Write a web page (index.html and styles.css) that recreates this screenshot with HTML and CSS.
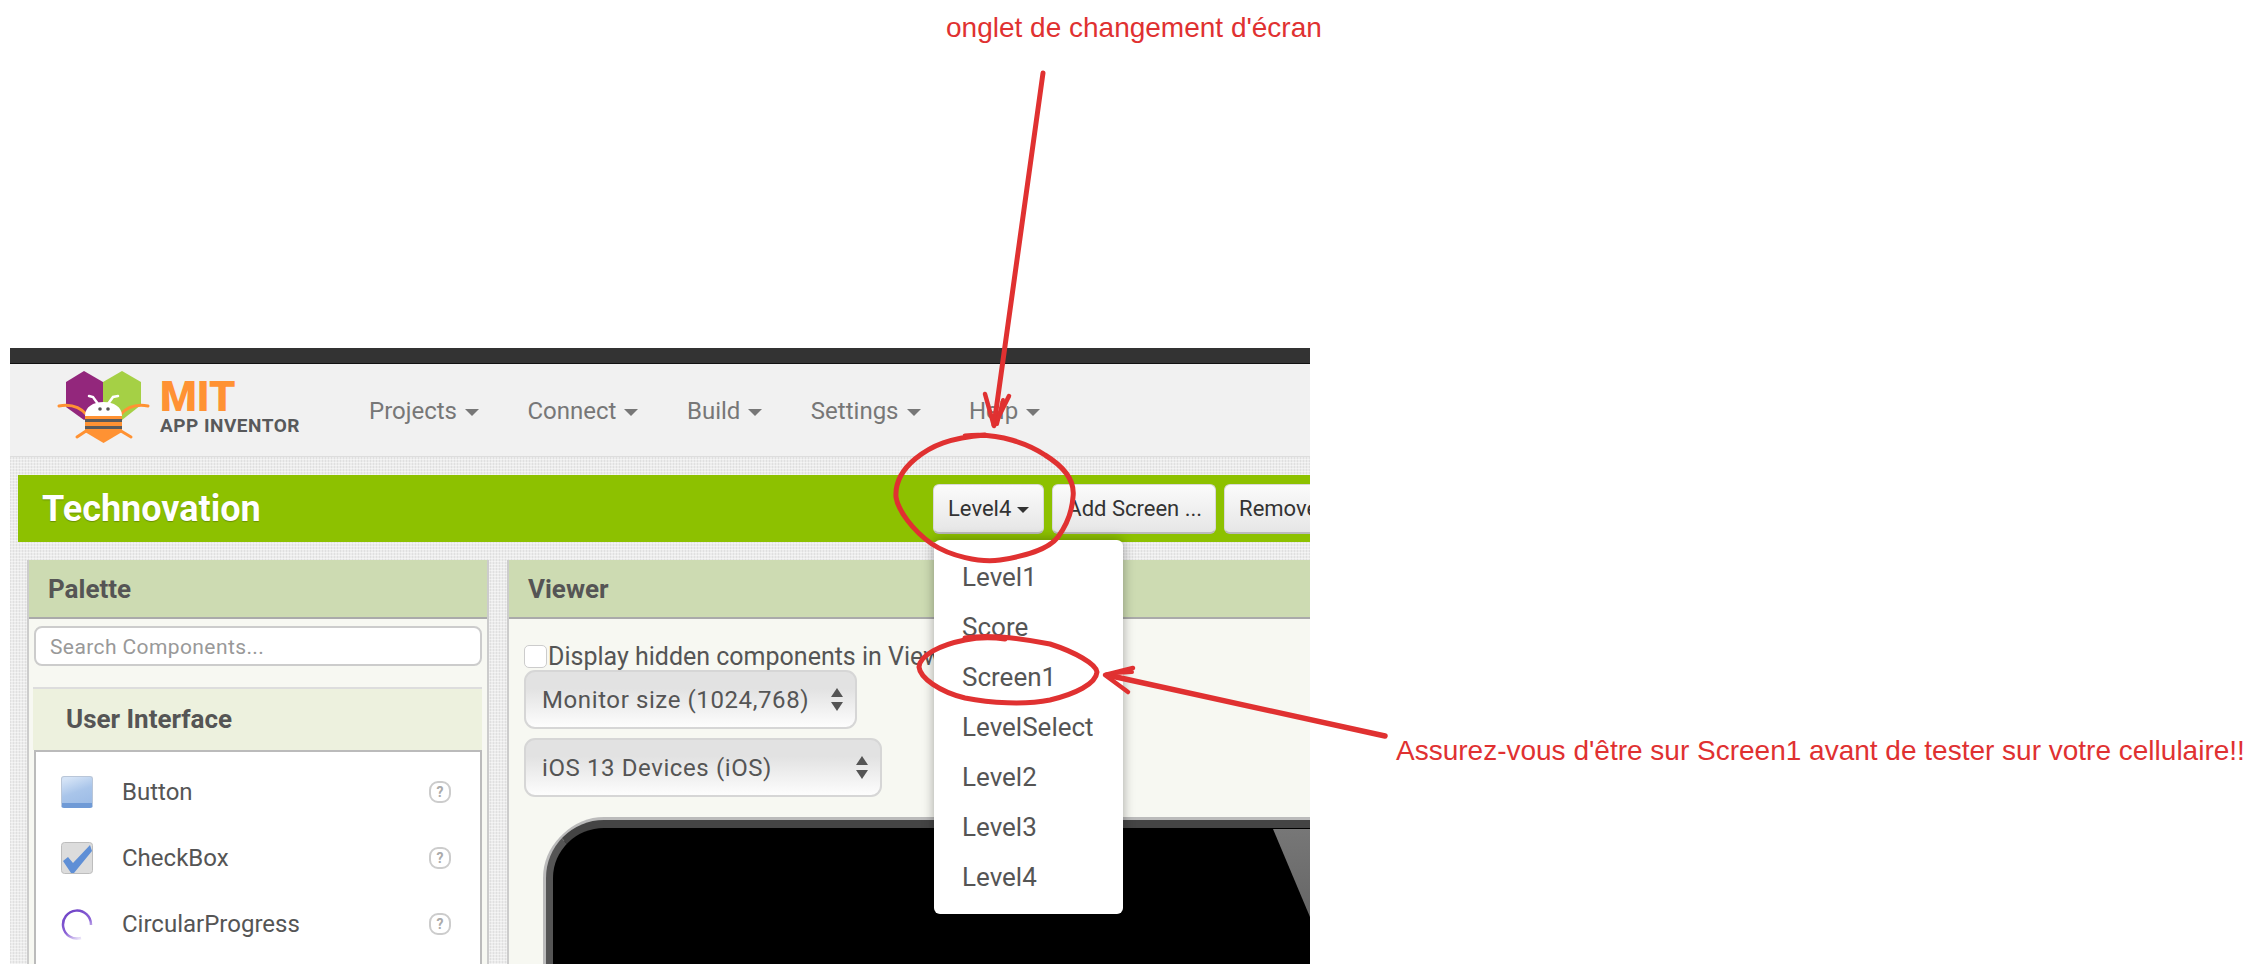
FILE: index.html
```html
<!DOCTYPE html>
<html lang="fr">
<head>
<meta charset="utf-8">
<title>Technovation</title>
<link rel="stylesheet" href="styles.css">
</head>
<body>
<div class="page">
  <div class="shot">
    <div class="topbar"></div>
    <header class="nav">
      <svg class="logo-mark" viewBox="55 366 100 80" width="100" height="80">
        <polygon fill="#93277c" points="84,371 103,382 103,410 84,420 66,407 66,382"/>
        <polygon fill="#a5d045" points="122,371 141,382 141,405 122,420 103,410 103,382"/>
        <path d="M59 406 C70 404 80 407 87 415" fill="none" stroke="#ff9233" stroke-width="3" stroke-linecap="round"/>
        <path d="M148 406 C137 404 127 407 120 415" fill="none" stroke="#ff9233" stroke-width="3" stroke-linecap="round"/>
        <path d="M77 437 L86 431 M131 437 L121 431" fill="none" stroke="#ff9233" stroke-width="3" stroke-linecap="round"/>
        <path d="M89 396 L93 397 L98 404 M118 396 L113 397 L108 404" fill="none" stroke="#fff" stroke-width="2.5" stroke-linecap="round"/>
        <path d="M85 416 C85 407 93 402 103.500 402 C114 402 122 407 122 416 Z" fill="#fff"/>
        <circle cx="100" cy="409" r="1.800" fill="#555"/>
        <circle cx="108" cy="409" r="1.800" fill="#555"/>
        <rect x="85" y="416" width="37" height="16" fill="#ff9233"/>
        <rect x="85" y="419" width="37" height="3" fill="#5a5a5a"/>
        <rect x="85" y="426" width="37" height="3" fill="#5a5a5a"/>
        <polygon fill="#ff9233" points="85,432 122,432 103.500,443"/>
      </svg>
      <div class="logo-text">
        <span class="logo-mit">MIT</span>
        <span class="logo-app">APP INVENTOR</span>
      </div>
      <nav class="menu-row">
        <span class="menu-item">Projects<i class="caret"></i></span>
        <span class="menu-item">Connect<i class="caret"></i></span>
        <span class="menu-item">Build<i class="caret"></i></span>
        <span class="menu-item">Settings<i class="caret"></i></span>
        <span class="menu-item">Help<i class="caret"></i></span>
      </nav>
    </header>
    <main class="work">
      <div class="project-bar">
        <h1 class="project-title">Technovation</h1>
        <button class="tool-btn">Level4<i class="caret caret-dark"></i></button>
        <button class="tool-btn tool-btn-add">Add Screen ...</button>
        <button class="tool-btn">Remove Screen</button>
      </div>
      <div class="panels">
        <section class="panel palette">
          <h2 class="panel-head">Palette</h2>
          <div class="search">Search Components...</div>
          <h3 class="drawer-head">User Interface</h3>
          <ul class="drawer">
            <li class="comp">
              <span class="ico ico-button"></span>
              <span class="comp-name">Button</span>
              <span class="help">?</span>
            </li>
            <li class="comp">
              <svg class="ico" viewBox="0 0 32 32" width="32" height="32">
                <rect x="0.500" y="0.500" width="31" height="31" rx="3" fill="#dcdcdc" stroke="#bdbdbd"/>
                <path d="M2 19 L7 15 L12 21 L29 3 L31 9 L13 31 L10 31 Z" fill="#5f8fd6"/>
              </svg>
              <span class="comp-name">CheckBox</span>
              <span class="help">?</span>
            </li>
            <li class="comp">
              <svg class="ico" viewBox="0 0 32 32" width="32" height="32">
                <defs>
                  <linearGradient id="ring" x1="0" y1="0" x2="0.600" y2="1">
                    <stop offset="0" stop-color="#6b3fc4"/>
                    <stop offset="0.650" stop-color="#8b62d6"/>
                    <stop offset="1" stop-color="#e9e2f8"/>
                  </linearGradient>
                </defs>
                <path d="M30 17 A14 14 0 1 0 20 30" fill="none" stroke="url(#ring)" stroke-width="2.500"/>
              </svg>
              <span class="comp-name">CircularProgress</span>
              <span class="help">?</span>
            </li>
          </ul>
        </section>
        <section class="panel viewer">
          <h2 class="panel-head">Viewer</h2>
          <div class="viewer-body">
            <label class="hidden-row"><span class="check"></span>Display hidden components in Viewer</label>
            <div class="select select-monitor">Monitor size (1024,768)<span class="updown"></span></div>
            <div class="select select-device">iOS 13 Devices (iOS)<span class="updown"></span></div>
            <div class="device">
              <div class="notch"></div>
            </div>
          </div>
        </section>
      </div>
    </main>
    <ul class="screen-menu">
      <li>Level1</li>
      <li>Score</li>
      <li>Screen1</li>
      <li>LevelSelect</li>
      <li>Level2</li>
      <li>Level3</li>
      <li>Level4</li>
    </ul>
  </div>
  <svg class="marks" viewBox="0 0 2261 974" width="2261" height="974">
    <g fill="none" stroke="#e03131" stroke-linecap="round" stroke-linejoin="round">
      <path stroke-width="5" d="M1043 73 L994 425"/>
      <path stroke-width="4.500" d="M985 394 L994 426 L1009 396"/>
      <path stroke-width="4" d="M997 424 L1003 400"/>
      <path stroke-width="5" d="M965 436 C1000 432 1030 445 1045 455 C1066 468 1075 482 1073 497 C1072 512 1066 526 1058 537 C1048 550 1025 556 1000 560 C980 563 950 556 932 544 C912 530 898 510 896 497 C895 482 902 470 915 459 C932 445 950 438 985 435"/>
      <path stroke-width="5" d="M965 638 C990 634 1020 638 1050 644 C1075 652 1096 664 1097 672 C1096 684 1075 694 1050 700 C1025 705 990 703 965 698 C940 692 920 678 919 667 C920 655 940 645 965 640 C975 638 990 637 1005 639"/>
      <path stroke-width="5.500" d="M1385 736 L1107 675"/>
      <path stroke-width="4.500" d="M1133 668 L1105 675 L1128 692"/>
      <path stroke-width="4" d="M1115 673 L1132 672"/>
    </g>
  </svg>
  <p class="note note-top">onglet de changement d'écran</p>
  <p class="note note-side">Assurez-vous d'être sur Screen1 avant de tester sur votre cellulaire!!</p>
</div>
</body>
</html>
```

FILE: styles.css
```css
* { box-sizing: border-box; }

html, body {
  margin: 0;
  padding: 0;
  background: #fff;
}

.page {
  position: relative;
  width: 2261px;
  height: 974px;
  overflow: hidden;
  padding: 348px 0 0 10px;
  font-family: Roboto, "Liberation Sans", sans-serif;
}

.shot {
  position: relative;
  width: 1300px;
  height: 616px;
  overflow: hidden;
  display: flex;
  flex-direction: column;
  color: #555;
}

.topbar {
  flex: 0 0 16px;
  background: #333;
  border-bottom: 1px solid #111;
}

.nav {
  flex: 0 0 92px;
  display: flex;
  align-items: center;
  background: #f1f1f1;
  padding-left: 45px;
}

.logo-mark { flex: none; margin-bottom: 8px; }

.logo-text {
  flex: 0 0 214px;
  display: flex;
  flex-direction: column;
  padding: 0 0 5px 5px;
  line-height: 1;
}

.logo-mit {
  font-weight: 900;
  font-size: 42px;
  line-height: 36px;
  color: #ff9233;
}

.logo-app {
  font-weight: 700;
  font-size: 19px;
  line-height: 22px;
  letter-spacing: 0.5px;
  color: #58595b;
}

.menu-row {
  display: flex;
  gap: 48.5px;
  margin-top: 2px;
}

.menu-item {
  font-size: 24px;
  color: #777;
  white-space: nowrap;
}

.caret {
  display: inline-block;
  width: 0;
  height: 0;
  margin-left: 8px;
  vertical-align: middle;
  border-left: 7px solid transparent;
  border-right: 7px solid transparent;
  border-top: 7px solid #777;
}

.caret-dark {
  margin-left: 6px;
  border-top-color: #333;
  border-left-width: 6px;
  border-right-width: 6px;
  border-top-width: 6px;
}

.work {
  flex: 1;
  min-height: 0;
  padding: 18px 0 0 8px;
  background-color: #ececec;
  background-image:
    repeating-linear-gradient(0deg, rgba(255,255,255,0.45) 0 1px, transparent 1px 3px),
    repeating-linear-gradient(90deg, rgba(200,200,200,0.35) 0 1px, transparent 1px 3px);
  border-top: 1px solid #ddd;
}

.project-bar {
  display: flex;
  align-items: center;
  gap: 8px;
  height: 67px;
  background: #8dc100;
  white-space: nowrap;
  overflow: hidden;
}

.project-title {
  flex: 0 0 907px;
  margin: 0;
  padding-left: 24px;
  font-size: 36px;
  font-weight: 700;
  color: #fff;
  text-shadow: 0 1px 1px rgba(0,0,0,0.25);
}

.tool-btn {
  flex: none;
  height: 50px;
  padding: 0 14px;
  font-family: inherit;
  font-size: 22px;
  color: #333;
  background: linear-gradient(#fbfbfb, #e6e6e6);
  border: 1px solid #d8d8d8;
  border-bottom: 2px solid #bbb;
  border-radius: 6px;
}

.tool-btn-add { padding: 0 13px 0 14px; }

.panels {
  display: flex;
  gap: 18px;
  margin: 18px 0 0 9px;
  height: 420px;
}

.panel {
  display: flex;
  flex-direction: column;
  background: #f7f8f2;
  border-left: 2px solid #ccc;
  border-right: 2px solid #ccc;
  overflow: hidden;
}

.palette { flex: 0 0 462px; }

.viewer { flex: 1; border-right: 0; }

.panel-head {
  flex: 0 0 59px;
  margin: 0;
  padding: 2px 0 0 19px;
  line-height: 55px;
  font-size: 26px;
  font-weight: 700;
  color: #555;
  background: #cddbb2;
  border-bottom: 2px solid #aaa;
}

.search {
  flex: 0 0 40px;
  margin: 7px 5px 0 5px;
  padding: 2px 0 0 14px;
  line-height: 34px;
  font-size: 21px;
  letter-spacing: 0.4px;
  color: #999;
  background: #fff;
  border: 2px solid #ccc;
  border-radius: 8px;
}

.drawer-head {
  flex: 0 0 63px;
  margin: 21px 5px 0 4px;
  padding-left: 33px;
  line-height: 60px;
  font-size: 26px;
  font-weight: 700;
  color: #555;
  background: #edf1de;
  border-top: 2px solid #ddd;
}

.drawer {
  flex: 1;
  margin: 0 5px;
  padding: 7px 0 0 0;
  list-style: none;
  background: #fff;
  border: 2px solid #bbb;
  border-bottom: 0;
}

.comp {
  display: flex;
  align-items: center;
  height: 66px;
  padding-left: 25px;
}

.ico {
  flex: 0 0 32px;
  width: 32px;
  height: 32px;
}

.ico-button {
  border: 1px solid #b9c6d8;
  border-bottom: 5px solid #6f9ad6;
  border-radius: 3px;
  background: linear-gradient(160deg, #d4e3f6 10%, #a9c5ea 55%, #9dbce6);
}

.comp-name {
  flex: 1;
  padding-left: 29px;
  font-size: 24px;
  color: #555;
}

.help {
  flex: 0 0 22px;
  height: 22px;
  margin-right: 29px;
  border: 2px solid #ccc;
  border-radius: 9px;
  font-size: 14px;
  font-weight: 700;
  line-height: 18px;
  text-align: center;
  color: #aaa;
}

.viewer-body {
  flex: 1;
  display: flex;
  flex-direction: column;
  align-items: flex-start;
  padding: 25px 0 0 15px;
}

.hidden-row {
  display: flex;
  align-items: center;
  height: 25px;
  font-size: 25px;
  color: #555;
  white-space: nowrap;
}

.check {
  width: 23px;
  height: 23px;
  margin-right: 1px;
  background: #fff;
  border: 1px solid #ccc;
  border-radius: 5px;
}

.select {
  display: flex;
  align-items: center;
  justify-content: space-between;
  height: 59px;
  padding: 0 12px 0 16px;
  font-size: 24px;
  letter-spacing: 0.6px;
  color: #555;
  background: linear-gradient(#e2e2e2 30%, #fdfdfd);
  border: 2px solid #d6d6d6;
  border-radius: 11px;
}

.select-monitor { width: 333px; margin-top: 1px; }
.select-device { width: 358px; margin-top: 9px; }

.updown {
  position: relative;
  width: 12px;
  height: 23px;
}

.updown::before,
.updown::after {
  content: "";
  position: absolute;
  left: 0;
  border-left: 6px solid transparent;
  border-right: 6px solid transparent;
}

.updown::before { top: 0; border-bottom: 9px solid #555; }
.updown::after { bottom: 0; border-top: 9px solid #555; }

.device {
  position: relative;
  flex: none;
  width: 1000px;
  height: 400px;
  margin: 23px 0 0 22px;
  background: #000;
  border-top: 8px solid #444;
  border-left: 7px solid #555;
  border-radius: 58px 0 0 0;
  box-shadow: 0 -3px 0 #bbb, -3px 0 0 #bbb;
}

.notch {
  position: absolute;
  top: 1px;
  left: 720px;
  width: 37px;
  height: 88px;
  background: linear-gradient(#777, #666);
  clip-path: polygon(0 0, 100% 0, 100% 100%);
}

.screen-menu {
  position: absolute;
  left: 924px;
  top: 192px;
  width: 189px;
  height: 374px;
  margin: 0;
  padding: 12px 0 0 28px;
  list-style: none;
  background: #fff;
  border-radius: 6px;
  box-shadow: 0 0 12px rgba(0,0,0,0.35);
}

.screen-menu li {
  height: 50px;
  line-height: 50px;
  font-size: 26px;
  color: #555;
}

.marks {
  position: absolute;
  left: 0;
  top: 0;
  pointer-events: none;
}

.note {
  position: absolute;
  margin: 0;
  font-family: "Liberation Sans", Arial, sans-serif;
  font-size: 28px;
  line-height: 30px;
  color: #e03131;
  white-space: nowrap;
}

.note-top { left: 946px; top: 13px; }
.note-side { left: 1396px; top: 736px; }
```
